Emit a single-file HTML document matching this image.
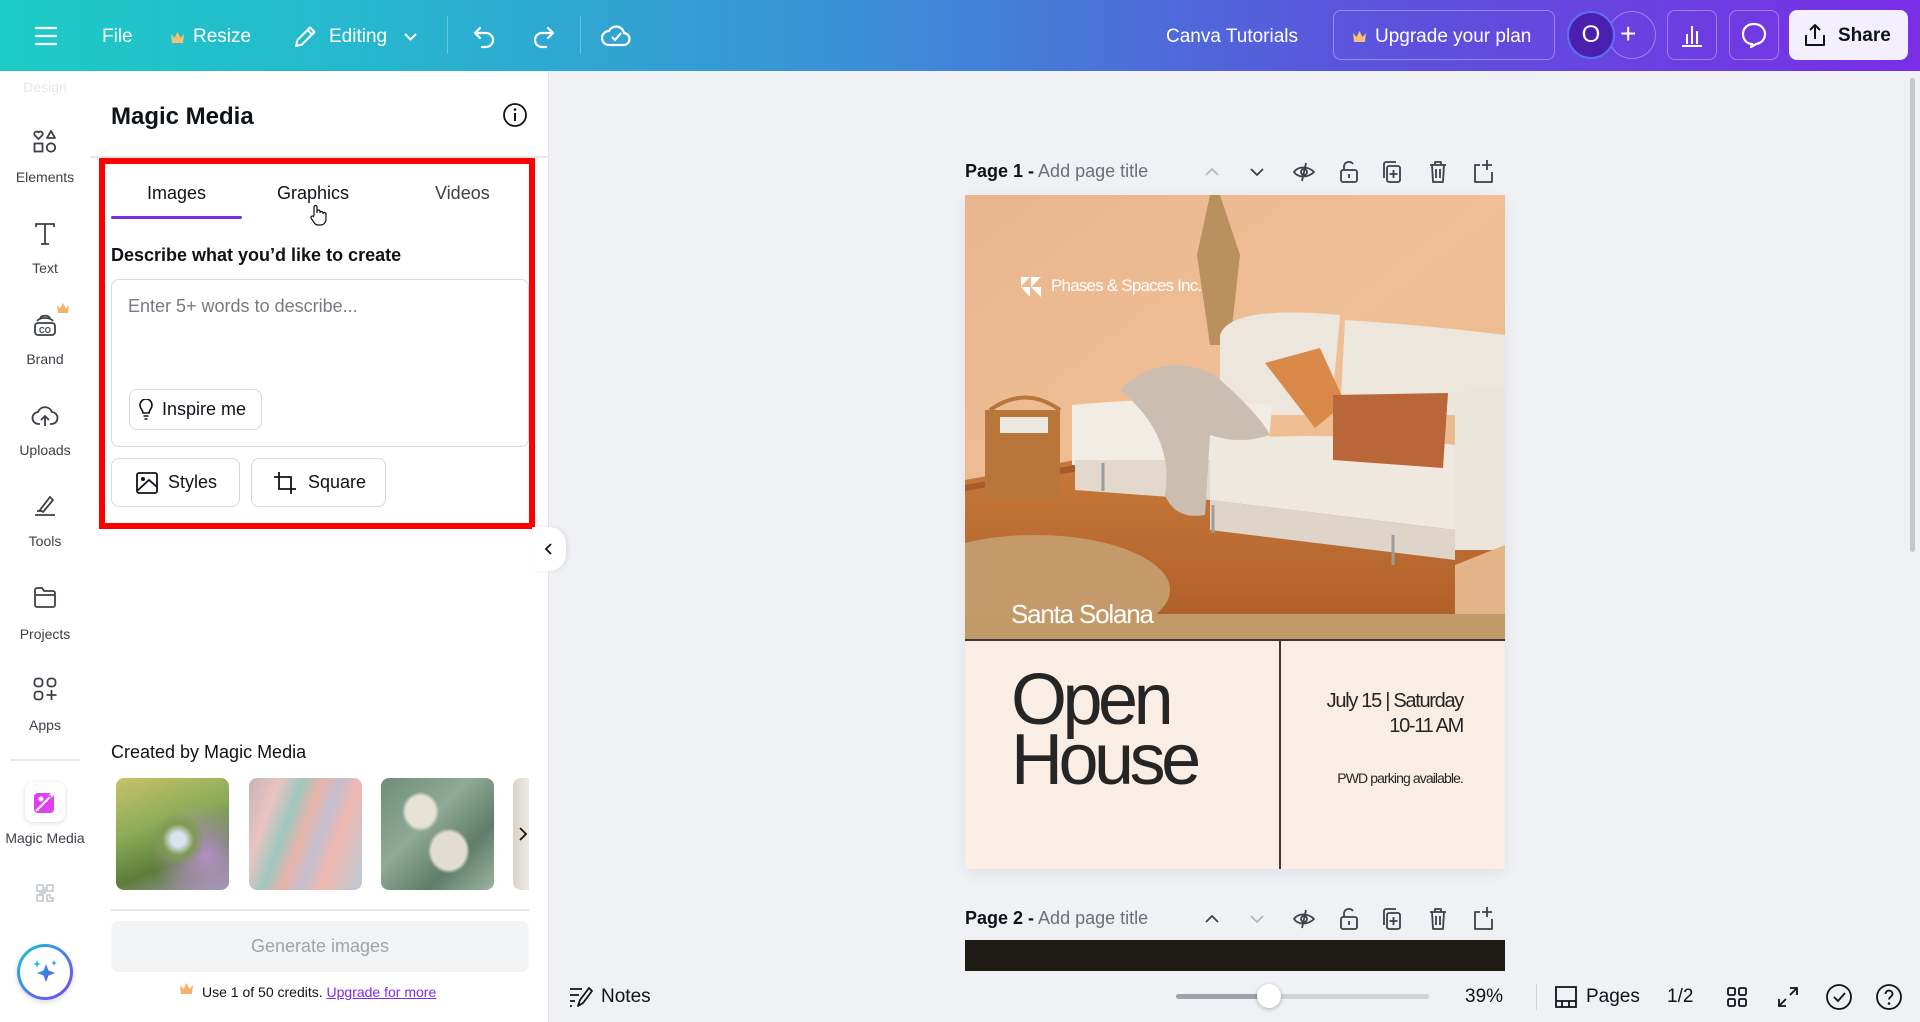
<!DOCTYPE html>
<html><head><meta charset="utf-8">
<style>
*{box-sizing:border-box;margin:0;padding:0}
html,body{width:1920px;height:1022px;overflow:hidden}
body{font-family:"Liberation Sans",sans-serif;background:#eff1f5;position:relative;color:#0e1318}
.abs{position:absolute}
.top{left:0;top:0;width:1920px;height:71px;background:linear-gradient(90deg,#1ccbc6 0%,#27b6cf 20%,#3b8fd6 45%,#5a55dc 70%,#7a2ee6 100%);color:#fff}
.top .t{position:absolute;top:26px;font-size:19px;color:#fff}
.rail{left:0;top:71px;width:90px;height:951px;background:#fff}
.ri{position:absolute;left:0;width:90px;text-align:center;font-size:14px;color:#3c4047}
.panel{left:90px;top:71px;width:459px;height:951px;background:#fff;border-right:1px solid #e3e5e8}
.btn{position:absolute;border:1px solid #d7d9dd;border-radius:8px;background:#fff;font-size:18px;color:#0e1318;display:flex;align-items:center}
svg{display:block}
.ic{position:absolute}
</style></head><body>

<!-- TOP BAR -->
<div class="abs top">
  <svg class="ic" style="left:34px;top:25px" width="24" height="22" viewBox="0 0 24 22"><path d="M2 3h20M2 11h20M2 19h20" stroke="#fff" stroke-width="2.2" stroke-linecap="round"/></svg>
  <div class="t" style="left:102px">File</div>
  <svg class="ic" style="left:170px;top:31px" width="15" height="13" viewBox="0 0 15 13"><path d="M1 3l3.5 4 3-6 3 6 3.5-4-1 9h-11z" fill="#f6c177"/></svg>
  <div class="t" style="left:193px">Resize</div>
  <svg class="ic" style="left:292px;top:24px" width="26" height="26" viewBox="0 0 26 26"><path d="M4 22l1.5-6L18 3.5l4.5 4.5L10 20.5zM15.5 6l4.5 4.5" fill="none" stroke="#fff" stroke-width="2" stroke-linejoin="round"/></svg>
  <div class="t" style="left:329px">Editing</div>
  <svg class="ic" style="left:403px;top:32px" width="15" height="10" viewBox="0 0 15 10"><path d="M2 2l5.5 5.5L13 2" fill="none" stroke="#fff" stroke-width="2"/></svg>
  <div class="abs" style="left:447px;top:16px;width:1px;height:38px;background:rgba(255,255,255,.3)"></div>
  <svg class="ic" style="left:471px;top:22px" width="28" height="28" viewBox="0 0 28 28"><path d="M9 6L4 11l5 5M4 11h11a7 7 0 010 14h-4" fill="none" stroke="#fff" stroke-width="2.2" stroke-linecap="round" stroke-linejoin="round"/></svg>
  <svg class="ic" style="left:529px;top:22px" width="28" height="28" viewBox="0 0 28 28"><path d="M19 6l5 5-5 5M24 11H13a7 7 0 000 14h4" fill="none" stroke="#fff" stroke-width="2.2" stroke-linecap="round" stroke-linejoin="round"/></svg>
  <div class="abs" style="left:580px;top:16px;width:1px;height:38px;background:rgba(255,255,255,.3)"></div>
  <svg class="ic" style="left:601px;top:21px" width="30" height="30" viewBox="0 0 30 30"><path d="M8 24h14a6 6 0 001-12 8 8 0 00-15-2 7 7 0 000 14z" fill="none" stroke="#fff" stroke-width="2.2"/><path d="M11 16l3 3 6-7" fill="none" stroke="#fff" stroke-width="2.2"/></svg>
  <div class="t" style="left:1166px">Canva Tutorials</div>
  <div class="abs" style="left:1333px;top:10px;width:222px;height:50px;border:1px solid rgba(255,255,255,.35);border-radius:8px"></div>
  <svg class="ic" style="left:1352px;top:30px" width="15" height="13" viewBox="0 0 15 13"><path d="M1 3l3.5 4 3-6 3 6 3.5-4-1 9h-11z" fill="#f6c177"/></svg>
  <div class="t" style="left:1375px">Upgrade your plan</div>
  <div class="abs" style="left:1608px;top:11px;width:48px;height:48px;border-radius:50%;border:1px solid rgba(255,255,255,.35)"></div>
  <div class="abs" style="left:1567px;top:11px;width:48px;height:48px;border-radius:50%;background:#4a1fb0;border:2px solid #5d6ff0;text-align:center;line-height:44px;font-size:24px;color:#fff">O</div>
  <div class="abs" style="left:1620px;top:18px;font-size:28px;color:#fff">+</div>
  <div class="abs" style="left:1667px;top:10px;width:50px;height:50px;border:1px solid rgba(255,255,255,.35);border-radius:8px"></div>
  <svg class="ic" style="left:1680px;top:22px" width="24" height="26" viewBox="0 0 24 26"><path d="M2 24h20M7 22V12M12 22V4M17 22V9" stroke="#fff" stroke-width="2"/></svg>
  <div class="abs" style="left:1729px;top:10px;width:50px;height:50px;border:1px solid rgba(255,255,255,.35);border-radius:8px"></div>
  <svg class="ic" style="left:1740px;top:21px" width="28" height="28" viewBox="0 0 28 28"><path d="M14 3C7 3 3 7.5 3 13s4 10 9 10l-1 3 5-3c6-1 9-5 9-10S21 3 14 3z" fill="none" stroke="#fff" stroke-width="2.2" stroke-linejoin="round"/></svg>
  <div class="abs" style="left:1789px;top:10px;width:119px;height:50px;background:#f4effd;border-radius:8px"></div>
  <svg class="ic" style="left:1802px;top:22px" width="26" height="26" viewBox="0 0 26 26"><path d="M13 17V3M8 8l5-5 5 5M4 13v10h18V13" fill="none" stroke="#0e1318" stroke-width="2" stroke-linejoin="round"/></svg>
  <div class="abs" style="left:1838px;top:25px;font-size:19px;color:#0e1318;font-weight:bold">Share</div>
</div>

<!-- LEFT RAIL -->
<div class="abs rail">
  <div class="ri" style="top:8px;color:#e6e7ea">Design</div>
  <svg class="ic" style="left:32px;top:58px" width="26" height="26" viewBox="0 0 26 26"><path d="M6.5 10L2.5 6a2.4 2.4 0 014-2.6 2.4 2.4 0 014 2.6zM19 2l4 7h-8z" fill="none" stroke="#3c4047" stroke-width="1.8" stroke-linejoin="round"/><rect x="2.5" y="14.5" width="8" height="8" fill="none" stroke="#3c4047" stroke-width="1.8"/><circle cx="19" cy="18.5" r="4.2" fill="none" stroke="#3c4047" stroke-width="1.8"/></svg>
  <div class="ri" style="top:98px">Elements</div>
  <svg class="ic" style="left:33px;top:150px" width="24" height="26" viewBox="0 0 24 26"><path d="M3 6V3h18v3M12 3v20M8 23h8" fill="none" stroke="#3c4047" stroke-width="1.8"/></svg>
  <div class="ri" style="top:189px">Text</div>
  <svg class="ic" style="left:32px;top:241px" width="26" height="26" viewBox="0 0 26 26"><path d="M5 9c3-4 13-4 16 0M8 6c2-3 8-3 10 0" fill="none" stroke="#3c4047" stroke-width="1.8"/><rect x="3" y="11" width="20" height="12" rx="3" fill="none" stroke="#3c4047" stroke-width="1.8"/><text x="13" y="21" font-size="8" text-anchor="middle" fill="#3c4047" font-family="Liberation Sans" font-weight="bold">CO</text></svg>
  <svg class="ic" style="left:56px;top:231px" width="14" height="12" viewBox="0 0 14 12"><path d="M1 3l3 3.5 3-5.5 3 5.5 3-3.5-1 8h-10z" fill="#f6b26b"/></svg>
  <div class="ri" style="top:280px">Brand</div>
  <svg class="ic" style="left:31px;top:331px" width="28" height="26" viewBox="0 0 28 26"><path d="M9 22H8a6 6 0 01-1-12 7.5 7.5 0 0114 0 6 6 0 01-1 12h-1" fill="none" stroke="#3c4047" stroke-width="1.8"/><path d="M14 24V14M10 18l4-4 4 4" fill="none" stroke="#3c4047" stroke-width="1.8"/></svg>
  <div class="ri" style="top:371px">Uploads</div>
  <svg class="ic" style="left:32px;top:422px" width="26" height="26" viewBox="0 0 26 26"><path d="M8 17L18 4l3 3-10 12zM3 22h20M5 18h4" fill="none" stroke="#3c4047" stroke-width="1.8" stroke-linejoin="round"/></svg>
  <div class="ri" style="top:462px">Tools</div>
  <svg class="ic" style="left:32px;top:513px" width="26" height="26" viewBox="0 0 26 26"><path d="M3 6a2 2 0 012-2h5l2 3h9a2 2 0 012 2v12a2 2 0 01-2 2H5a2 2 0 01-2-2zM3 11h20" fill="none" stroke="#3c4047" stroke-width="1.8"/></svg>
  <div class="ri" style="top:555px">Projects</div>
  <svg class="ic" style="left:32px;top:605px" width="26" height="26" viewBox="0 0 26 26"><rect x="2.5" y="2.5" width="8" height="8" rx="3" fill="none" stroke="#3c4047" stroke-width="1.8"/><rect x="15.5" y="2.5" width="8" height="8" rx="3" fill="none" stroke="#3c4047" stroke-width="1.8"/><rect x="2.5" y="15.5" width="8" height="8" rx="3" fill="none" stroke="#3c4047" stroke-width="1.8"/><path d="M19.5 14v10M14.5 19h10" stroke="#3c4047" stroke-width="1.8"/></svg>
  <div class="ri" style="top:646px">Apps</div>
  <div class="abs" style="left:10px;top:688px;width:70px;height:2px;background:#e4e6ea"></div>
  <div class="abs" style="left:25px;top:711px;width:40px;height:40px;border-radius:8px;background:#fff;box-shadow:0 1px 4px rgba(0,0,0,.15)"></div>
  <svg class="ic" style="left:33px;top:719px" width="24" height="24" viewBox="0 0 24 24"><rect x="1" y="3" width="20" height="20" rx="4" fill="#e040f0"/><path d="M3 21L17 7" stroke="#fff" stroke-width="2"/><circle cx="8" cy="9" r="2.5" fill="#fff"/><path d="M19 1l1 2.5 2.5 1-2.5 1-1 2.5-1-2.5-2.5-1 2.5-1z" fill="#fff"/></svg>
  <div class="ri" style="top:759px;color:#3c4047">Magic Media</div>
  <svg class="ic" style="left:36px;top:813px" width="18" height="18" viewBox="0 0 18 18"><g fill="none" stroke="#bfc3c9" stroke-width="1.5"><rect x="1" y="1" width="6" height="6"/><rect x="11" y="1" width="6" height="6"/><rect x="1" y="11" width="6" height="6"/><path d="M11 11h3v3h3v3h-6zM9 3v6H3"/></g></svg>
  <div class="abs" style="left:17px;top:873px;width:56px;height:56px;border-radius:50%;background:linear-gradient(#fff,#fff) padding-box,linear-gradient(135deg,#19c5d6,#7b3ff2) border-box;border:3px solid transparent;box-shadow:0 2px 6px rgba(0,0,0,.15)"></div>
  <svg class="ic" style="left:31px;top:887px" width="28" height="28" viewBox="0 0 28 28"><defs><linearGradient id="sg" x1="0" y1="0" x2="1" y2="1"><stop offset="0" stop-color="#17c0d8"/><stop offset="1" stop-color="#6b3cf0"/></linearGradient></defs><path d="M15 6l2.5 6.5L24 15l-6.5 2.5L15 24l-2.5-6.5L6 15l6.5-2.5z" fill="url(#sg)"/><path d="M6 2l1 3 3 1-3 1-1 3-1-3-3-1 3-1z" fill="#17c0d8"/><path d="M23 2l.8 2.2 2.2.8-2.2.8L23 8l-.8-2.2L20 5l2.2-.8z" fill="#3b8fd6"/></svg>
</div>

<!-- PANEL -->
<div class="abs panel">
  <div class="abs" style="left:21px;top:32px;font-size:24px;font-weight:bold">Magic Media</div>
  <svg class="ic" style="left:412px;top:31px" width="26" height="26" viewBox="0 0 26 26"><circle cx="13" cy="13" r="11" fill="none" stroke="#0e1318" stroke-width="1.8"/><path d="M13 11v8" stroke="#0e1318" stroke-width="2"/><circle cx="13" cy="7.5" r="1.3" fill="#0e1318"/></svg>
  <div class="abs" style="left:0;top:85px;width:459px;height:2px;background:#e6e8eb"></div>
  <div class="abs" style="left:57px;top:112px;font-size:18px">Images</div>
  <div class="abs" style="left:187px;top:112px;font-size:18px">Graphics</div>
  <div class="abs" style="left:345px;top:112px;font-size:18px;color:#3c4047">Videos</div>
  <div class="abs" style="left:21px;top:145px;width:131px;height:3px;background:#7d2ae8;border-radius:2px"></div>
  <svg class="ic" style="left:219px;top:133px" width="18" height="22" viewBox="0 0 18 22"><path d="M5 11V3a1.5 1.5 0 013 0v6V7.5a1.5 1.5 0 013 0V9a1.5 1.5 0 013 0v1a1.5 1.5 0 013 0v5c0 3-2 6-5.5 6H9c-2 0-3-1-4-2.5L2 14a1.5 1.5 0 012.5-1.5z" fill="#fff" stroke="#0e1318" stroke-width="1.2"/></svg>
  <div class="abs" style="left:21px;top:174px;font-size:18px;font-weight:bold">Describe what you’d like to create</div>
  <div class="abs" style="left:21px;top:208px;width:418px;height:168px;border:1px solid #d7d9dd;border-radius:8px"></div>
  <div class="abs" style="left:38px;top:225px;font-size:18px;color:#767b82">Enter 5+ words to describe...</div>
  <div class="btn" style="left:39px;top:318px;width:133px;height:41px;padding-left:32px">Inspire me</div>
  <svg class="ic" style="left:49px;top:328px" width="14" height="21" viewBox="0 0 14 21"><path d="M4 14c0-3-3-4-3-8a6 6 0 0112 0c0 4-3 5-3 8zM4.5 17h5M5.5 20h3" fill="none" stroke="#0e1318" stroke-width="1.6"/></svg>
  <div class="btn" style="left:21px;top:387px;width:129px;height:49px;padding-left:56px">Styles</div>
  <svg class="ic" style="left:45px;top:400px" width="24" height="24" viewBox="0 0 24 24"><rect x="2" y="2" width="20" height="20" rx="2" fill="none" stroke="#0e1318" stroke-width="1.8"/><path d="M2 20L14 9l8 7" fill="none" stroke="#0e1318" stroke-width="1.8"/><circle cx="8" cy="8" r="2" fill="#0e1318"/></svg>
  <div class="btn" style="left:161px;top:387px;width:135px;height:49px;padding-left:56px">Square</div>
  <svg class="ic" style="left:183px;top:400px" width="24" height="24" viewBox="0 0 24 24"><path d="M6 1v17h17M1 6h17v17" fill="none" stroke="#0e1318" stroke-width="1.8"/></svg>
  <div class="abs" style="left:9px;top:87px;width:436px;height:371px;border:6px solid #ff0000"></div>

  <div class="abs" style="left:21px;top:671px;font-size:18px">Created by Magic Media</div>
  <div class="abs" style="left:26px;top:707px;width:113px;height:112px;border-radius:8px;background:radial-gradient(circle at 55% 55%,#d8e4f0 0 8%,#7e9a52 18%,transparent 30%),radial-gradient(circle at 80% 70%,#b48fc6,transparent 45%),linear-gradient(160deg,#c7c26a 0%,#8bab58 40%,#5d7d39 70%,#a59ab9 100%)"></div>
  <div class="abs" style="left:159px;top:707px;width:113px;height:112px;border-radius:8px;background:linear-gradient(110deg,#c9b3b8 0%,#e9c4c0 20%,#9fc8c0 35%,#e8b3a8 48%,#c2bfd0 60%,#f0b8b0 72%,#b9c9d3 100%)"></div>
  <div class="abs" style="left:291px;top:707px;width:113px;height:112px;border-radius:8px;background:radial-gradient(ellipse at 60% 65%,#e2ddd0 0 18%,transparent 22%),radial-gradient(ellipse at 35% 30%,#e8e2d4 0 14%,transparent 18%),linear-gradient(135deg,#6f8d7a,#8faa96 40%,#5f7d6a 70%,#9cb3a2)"></div>
  <div class="abs" style="left:423px;top:707px;width:16px;height:112px;border-radius:8px 0 0 8px;background:linear-gradient(90deg,#d9d2c8,#efeae3)"></div>
  <svg class="ic" style="left:428px;top:755px" width="10" height="16" viewBox="0 0 10 16"><path d="M2 2l6 6-6 6" fill="none" stroke="#0e1318" stroke-width="1.8"/></svg>
  <div class="abs" style="left:21px;top:838px;width:418px;height:2px;background:#e4e6ea"></div>
  <div class="abs" style="left:21px;top:850px;width:418px;height:51px;border-radius:8px;background:#f2f3f5;text-align:center;line-height:51px;font-size:18px;color:#9fa3a9">Generate images</div>
  <svg class="ic" style="left:89px;top:911px" width="15" height="13" viewBox="0 0 15 13"><path d="M1 3l3.5 4 3-6 3 6 3.5-4-1 9h-11z" fill="#f6b26b"/></svg>
  <div class="abs" style="left:112px;top:913px;font-size:14px">Use 1 of 50 credits. <span style="color:#7d2ae8;text-decoration:underline">Upgrade for more</span></div>
</div>
<div class="abs" style="left:532px;top:527px;width:34px;height:44px;border-radius:0 17px 17px 0;background:#fff;box-shadow:2px 0 4px rgba(0,0,0,.08)"></div>
<svg class="ic" style="left:544px;top:542px" width="10" height="14" viewBox="0 0 10 14"><path d="M7 2L2 7l5 5" fill="none" stroke="#0e1318" stroke-width="1.8"/></svg>

<!-- CANVAS HEADERS -->
<div class="abs" style="left:965px;top:161px;font-size:18px"><b style="font-weight:bold;color:#0e1318">Page 1 -</b> <span style="color:#6b7077">Add page title</span></div>
<div class="abs" style="left:965px;top:908px;font-size:18px"><b style="font-weight:bold;color:#0e1318">Page 2 -</b> <span style="color:#6b7077">Add page title</span></div>

<svg class="ic" style="left:1200px;top:157px" width="310" height="30" viewBox="0 0 310 30">
 <g fill="none" stroke="#3c4047" stroke-width="1.8" stroke-linejoin="round">
  <path d="M6 18l6-6 6 6" stroke="#b5b9bf"/>
  <path d="M51 12l6 6 6-6"/>
  <path d="M94 15c4-6 14-6 20 0-6 6-16 6-20 0zM106 6l-4 18"/><circle cx="104" cy="15" r="3"/>
  <rect x="141" y="13" width="16" height="12" rx="2"/><path d="M144 13V9a5 5 0 019-2M149 17v4"/>
  <rect x="187" y="9" width="13" height="16" rx="2"/><path d="M184 21V7a2 2 0 012-2h10M193.5 13v8M189.5 17h8"/>
  <path d="M230 8h16M235 8V5h6v3M232 8l1 17h10l1-17M236 12v9M240 12v9"/>
  <path d="M280 8h-5v17h17v-10M287 3v10M282 8h10"/>
 </g>
</svg>
<svg class="ic" style="left:1200px;top:904px" width="310" height="30" viewBox="0 0 310 30">
 <g fill="none" stroke="#3c4047" stroke-width="1.8" stroke-linejoin="round">
  <path d="M6 18l6-6 6 6"/>
  <path d="M51 12l6 6 6-6" stroke="#b5b9bf"/>
  <path d="M94 15c4-6 14-6 20 0-6 6-16 6-20 0zM106 6l-4 18"/><circle cx="104" cy="15" r="3"/>
  <rect x="141" y="13" width="16" height="12" rx="2"/><path d="M144 13V9a5 5 0 019-2M149 17v4"/>
  <rect x="187" y="9" width="13" height="16" rx="2"/><path d="M184 21V7a2 2 0 012-2h10M193.5 13v8M189.5 17h8"/>
  <path d="M230 8h16M235 8V5h6v3M232 8l1 17h10l1-17M236 12v9M240 12v9"/>
  <path d="M280 8h-5v17h17v-10M287 3v10M282 8h10"/>
 </g>
</svg>

<!-- PAGE 1 -->
<div class="abs" style="left:965px;top:195px;width:540px;height:674px;background:#faeee4;box-shadow:0 4px 14px rgba(0,0,0,.07);overflow:hidden">
  <svg width="540" height="420" viewBox="0 0 540 420" style="position:absolute;left:0;top:0">
    <defs>
      <linearGradient id="wall" x1="0" y1="0" x2="1" y2="1"><stop offset="0" stop-color="#e8b68e"/><stop offset=".5" stop-color="#f0bf95"/><stop offset="1" stop-color="#e8b589"/></linearGradient>
      <linearGradient id="floor" x1="0" y1="0" x2="0" y2="1"><stop offset="0" stop-color="#c77a3a"/><stop offset="1" stop-color="#b1602a"/></linearGradient>
    </defs>
    <rect width="540" height="420" fill="url(#wall)"/>
    <path d="M0 285 L110 265 L540 330 L540 420 L0 420Z" fill="url(#floor)"/>
    <path d="M0 290 L110 270 L120 275 L0 296Z" fill="#a55b2a"/>
    <ellipse cx="70" cy="395" rx="135" ry="55" fill="#c49a6a"/>
    <path d="M245 0 L255 0 L275 60 L265 150 L245 150 L232 60Z" fill="#b08a55" opacity=".85"/>
    <path d="M20 215 h75 v90 h-75z" fill="#b8763a"/>
    <path d="M25 215 q35-25 70 0" fill="none" stroke="#b8763a" stroke-width="4"/>
    <rect x="35" y="222" width="48" height="16" fill="#ece8e2"/>
    <path d="M255 140 q10-30 120-20 q-5 60-10 100 l-110 0z" fill="#ece6dc"/>
    <path d="M380 125 q80 5 160 15 v80 h-165z" fill="#ece6dc"/>
    <path d="M107 210 q100-10 200 0 l-5 60 l-195 0z" fill="#f1ece4"/>
    <path d="M245 245 q130-10 245 5 l0 85 l-245 -30z" fill="#efe8de"/>
    <path d="M490 200 q30-10 50-5 v160 h-50z" fill="#ebe4da"/>
    <path d="M245 305 l245 30 l0 30 l-245 -30z" fill="#ded4c7"/>
    <path d="M110 265 l135 0 l0 40 l-135-10z" fill="#e2d9cc"/>
    <path d="M300 168 l55-15 l25 55 l-30 25z" fill="#d98a48"/>
    <path d="M368 200 l115 -2 l-5 75 l-110 -8z" fill="#b9673a"/>
    <path d="M155 195 q40-40 95 -15 q45 40 55 60 q-30 10 -60 0 l-5 80 q-30 5 -40-20 q10-60 -45-105z" fill="#cbbdaf"/>
    <path d="M138 268 v28 M248 310 v28 M428 340 v30" stroke="#9c9c9c" stroke-width="3"/>
    <path d="M490 370 l50-20 v70 h-50z" fill="#e2b487"/>
  </svg>
  <svg class="ic" style="left:55px;top:81px" width="22" height="22" viewBox="0 0 22 22"><path d="M1 1h9l-9 9zM11 1h10l-10 10zM1 11l9 10V11zM11 11h10v10z" fill="#fff"/></svg>
  <div class="abs" style="left:86px;top:81px;font-size:17px;color:#fff;letter-spacing:-.8px">Phases &amp; Spaces Inc.</div>
  <div class="abs" style="left:0;top:419px;width:540px;height:26px;background:#c29a68"></div>
  <div class="abs" style="left:46px;top:404px;font-size:26px;color:#fff;letter-spacing:-1.2px">Santa Solana</div>
  <div class="abs" style="left:0;top:444px;width:540px;height:2px;background:#3a3a3a"></div>
  <div class="abs" style="left:314px;top:446px;width:2px;height:228px;background:#3a3a3a"></div>
  <div class="abs" style="left:46px;top:475px;font-size:72px;line-height:60px;letter-spacing:-4.5px;color:#252525">Open<br>House</div>
  <div class="abs" style="left:330px;top:494px;width:168px;text-align:right;font-size:20px;line-height:25px;letter-spacing:-1.3px;color:#252525">July 15 | Saturday<br>10-11 AM</div>
  <div class="abs" style="left:330px;top:575px;width:168px;text-align:right;font-size:14px;letter-spacing:-.9px;color:#252525">PWD parking available.</div>
</div>

<!-- PAGE 2 strip -->
<div class="abs" style="left:965px;top:940px;width:540px;height:31px;background:#1d1b14"></div>

<!-- BOTTOM BAR -->
<div class="abs" style="left:549px;top:971px;width:1371px;height:51px;background:#eff1f5"></div>
<svg class="ic" style="left:568px;top:985px" width="26" height="24" viewBox="0 0 26 24"><path d="M2 4h12M2 10h9M2 16h5M2 21h2M10 21l2-6L21 3l3 3-9 12z" fill="none" stroke="#0e1318" stroke-width="1.8" stroke-linejoin="round"/></svg>
<div class="abs" style="left:601px;top:986px;font-size:19px">Notes</div>
<div class="abs" style="left:1176px;top:994px;width:253px;height:5px;border-radius:3px;background:#d0d3d8"></div>
<div class="abs" style="left:1176px;top:994px;width:93px;height:5px;border-radius:3px;background:#9ea3aa"></div>
<div class="abs" style="left:1257px;top:984px;width:24px;height:24px;border-radius:50%;background:#fff;box-shadow:0 1px 4px rgba(0,0,0,.3)"></div>
<div class="abs" style="left:1465px;top:986px;font-size:19px">39%</div>
<div class="abs" style="left:1536px;top:984px;width:1px;height:26px;background:#d0d3d8"></div>
<svg class="ic" style="left:1553px;top:984px" width="26" height="26" viewBox="0 0 26 26"><path d="M3 3h20v14H3zM3 17v6h20v-6M9 17v6M16 17v6" fill="none" stroke="#0e1318" stroke-width="1.8"/></svg>
<div class="abs" style="left:1586px;top:986px;font-size:19px">Pages</div>
<div class="abs" style="left:1667px;top:986px;font-size:19px">1/2</div>
<svg class="ic" style="left:1726px;top:986px" width="22" height="22" viewBox="0 0 22 22"><g fill="none" stroke="#0e1318" stroke-width="1.8"><rect x="2" y="2" width="7" height="7" rx="1.5"/><rect x="13" y="2" width="7" height="7" rx="1.5"/><rect x="2" y="13" width="7" height="7" rx="1.5"/><rect x="13" y="13" width="7" height="7" rx="1.5"/></g></svg>
<svg class="ic" style="left:1776px;top:985px" width="24" height="24" viewBox="0 0 24 24"><path d="M14 3h7v7M21 3l-7 7M10 21H3v-7M3 21l7-7" fill="none" stroke="#0e1318" stroke-width="1.8"/></svg>
<svg class="ic" style="left:1825px;top:983px" width="28" height="28" viewBox="0 0 28 28"><circle cx="14" cy="14" r="12" fill="none" stroke="#0e1318" stroke-width="1.8"/><path d="M9 14l4 4 7-8" fill="none" stroke="#0e1318" stroke-width="1.8"/></svg>
<svg class="ic" style="left:1875px;top:983px" width="28" height="28" viewBox="0 0 28 28"><circle cx="14" cy="14" r="12" fill="none" stroke="#0e1318" stroke-width="1.8"/><path d="M10.5 11a3.5 3.5 0 117 0c0 2.5-3.5 3-3.5 5.5" fill="none" stroke="#0e1318" stroke-width="1.8"/><circle cx="14" cy="20.5" r="1.3" fill="#0e1318"/></svg>

<div class="abs" style="left:1910px;top:78px;width:5px;height:474px;border-radius:3px;background:#c4c7cc"></div>
</body></html>
